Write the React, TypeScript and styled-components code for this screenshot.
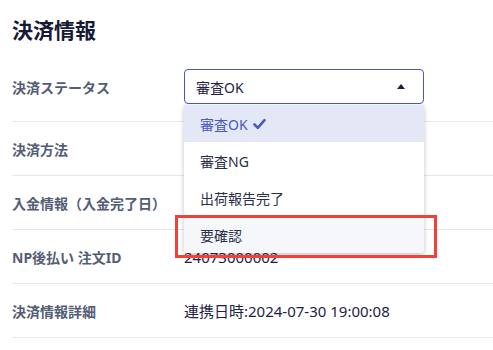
import React from 'react';
import styled, { createGlobalStyle } from 'styled-components';

const GlobalStyle = createGlobalStyle`
  html, body {
    margin: 0;
    padding: 0;
    background: #ffffff;
  }
  body {
    font-family: "Noto Sans", "Noto Sans CJK JP", sans-serif;
    color: #1e2340;
  }
`;

const Section = styled.section`
  width: 493px;
  height: 350px;
  padding-left: 12px;
  box-sizing: border-box;
  overflow: hidden;
`;

const Title = styled.h2`
  margin: 16px 0 25px;
  font-size: 21px;
  line-height: 28px;
  font-weight: 700;
  color: #161a36;
`;

const Row = styled.div<{ $first?: boolean }>`
  display: grid;
  grid-template-columns: 172px 240px;
  align-items: center;
  height: ${(p) => (p.$first ? '35px' : '53px')};
  padding-bottom: ${(p) => (p.$first ? '17px' : '0')};
  border-bottom: 1px solid #e6e7eb;
`;

const Label = styled.div`
  font-size: 14px;
  font-weight: 700;
  color: #545d75;
  white-space: nowrap;
`;

const Value = styled.div`
  font-size: 15px;
  color: #1e2340;
  white-space: nowrap;
`;

const SelectWrap = styled.div`
  position: relative;
`;

const SelectBox = styled.div`
  display: flex;
  align-items: center;
  justify-content: space-between;
  height: 35px;
  box-sizing: border-box;
  padding: 0 18px 0 11px;
  border: 1px solid #4b58c0;
  border-radius: 4px;
  font-size: 14px;
  color: #1e2340;
  background: #fff;
`;

const Caret = styled.span`
  width: 0;
  height: 0;
  border-left: 4px solid transparent;
  border-right: 4px solid transparent;
  border-bottom: 5px solid #1b1f3b;
`;

const Menu = styled.ul`
  position: absolute;
  top: 36px;
  left: 0;
  width: 100%;
  margin: 0;
  padding: 0;
  list-style: none;
  background: #fff;
  border-radius: 0 0 4px 4px;
  box-shadow: 0 2px 5px rgba(20, 25, 50, 0.25);
  z-index: 2;
`;

const Option = styled.li<{ $selected?: boolean; $hover?: boolean }>`
  position: relative;
  display: flex;
  align-items: center;
  gap: 5px;
  height: 37px;
  padding: 0 16px;
  font-size: 14px;
  color: ${(p) => (p.$selected ? '#4a59c4' : '#2a2f48')};
  background: ${(p) => (p.$selected ? '#e4e8f6' : p.$hover ? '#f6f7fb' : '#fff')};
  border-radius: ${(p) => (p.$hover ? '0 0 4px 4px' : '0')};
`;

const Highlight = styled.span`
  position: absolute;
  left: -9px;
  top: -1px;
  right: -13px;
  bottom: -5px;
  border: 3px solid #f3413a;
  pointer-events: none;
`;

const CheckIcon = () => (
  <svg width="13" height="12" viewBox="0 0 13 12">
    <polyline
      points="1.5,6.5 4.8,9.8 11.5,2.2"
      fill="none"
      stroke="#4a59c4"
      strokeWidth="2.6"
      strokeLinecap="round"
      strokeLinejoin="round"
    />
  </svg>
);

const statuses = ['審査OK', '審査NG', '出荷報告完了', '要確認'];

export default function App() {
  return (
    <Section>
      <GlobalStyle />
      <Title>決済情報</Title>
      <Row $first>
        <Label>決済ステータス</Label>
        <SelectWrap>
          <SelectBox>
            <span>審査OK</span>
            <Caret />
          </SelectBox>
          <Menu>
            {statuses.map((s, i) => (
              <Option key={s} $selected={i === 0} $hover={i === 3}>
                {s}
                {i === 0 && <CheckIcon />}
                {i === 3 && <Highlight />}
              </Option>
            ))}
          </Menu>
        </SelectWrap>
      </Row>
      <Row>
        <Label>決済方法</Label>
        <Value>NP後払い</Value>
      </Row>
      <Row>
        <Label>入金情報（入金完了日）</Label>
        <Value>-</Value>
      </Row>
      <Row>
        <Label>NP後払い 注文ID</Label>
        <Value>24073000002</Value>
      </Row>
      <Row>
        <Label>決済情報詳細</Label>
        <Value>連携日時:2024-07-30 19:00:08</Value>
      </Row>
    </Section>
  );
}
